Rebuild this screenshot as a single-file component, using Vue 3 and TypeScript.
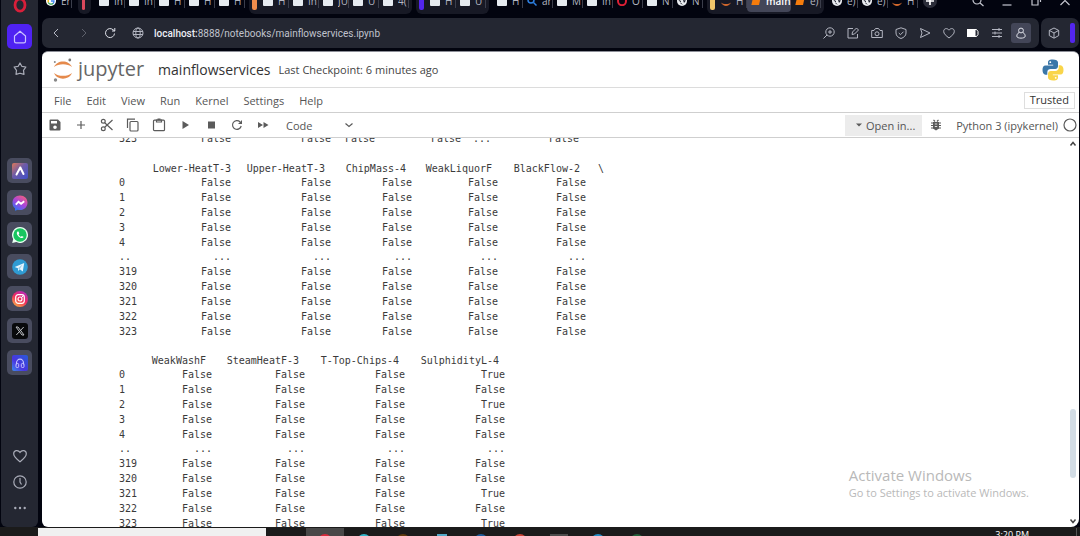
<script setup lang="ts">
import { ref } from 'vue'

interface Tab { icon: string; label: string; active?: boolean }
interface TabGroup { bar?: string; tabs: Tab[] }
interface Frame { widths: number[]; header: string[]; rows: string[][] }

const doc = (label: string): Tab => ({ icon: 'doc', label })

const groups: TabGroup[] = [
  { tabs: [{ icon: 'google', label: 'Er' }] },
  { bar: 'red', tabs: [] },
  { tabs: [doc('In'), doc('In'), doc('H'), doc('H'), doc('H')] },
  { bar: 'orange', tabs: [doc('H'), doc('In'), doc('JU'), doc('U'), doc('4(')] },
  { bar: 'blue', tabs: [doc('H'), doc('U')] },
  {
    tabs: [doc('H'), { icon: 'search', label: 'ar' }, doc('M'), doc('In'),
      { icon: 'opera', label: 'O' }, doc('N'), { icon: 'globe', label: 'N' }],
  },
  {
    bar: 'yellow',
    tabs: [{ icon: 'jupyter', label: 'H' }, { icon: 'book', label: 'main', active: true }, { icon: 'book', label: 'e)' }],
  },
  { tabs: [{ icon: 'globe', label: 'e)' }, { icon: 'globe', label: 'e)' }, { icon: 'jupyter', label: 'H' }] },
]

const menus = ['File', 'Edit', 'View', 'Run', 'Kernel', 'Settings', 'Help']
const apps = ['Aria', 'Messenger', 'WhatsApp', 'Telegram', 'Instagram', 'X', 'Player']
const tools = ['Save', 'Insert', 'Cut', 'Copy', 'Paste', 'Run', 'Stop', 'Restart', 'Run all']
const actions = ['Zoom', 'Edit page', 'Snapshot', 'Shield', 'Send', 'Favourite', 'Battery', 'Settings', 'Profile']
const cellType = ref('Code')

const index = ['0', '1', '2', '3', '4', '..', '319', '320', '321', '322', '323']
const build = (columns: number, last: (label: string) => string): string[][] =>
  index.map((label) => [
    label,
    ...Array.from({ length: columns - 1 }, () => (label === '..' ? '...' : 'False')),
    label === '..' ? '...' : last(label),
  ])
const trueRows = ['0', '2', '321', '323']

const previous: Frame = {
  widths: [24, 88, 100, 44, 86, 30, 88],
  header: [],
  rows: [['323', 'False', 'False', 'False', 'False', '...', 'False']],
}
const frames: Frame[] = [
  {
    widths: [24, 88, 100, 81, 86, 88, 24],
    header: ['', 'Lower-HeatT-3', 'Upper-HeatT-3', 'ChipMass-4', 'WeakLiquorF', 'BlackFlow-2', '\\'],
    rows: build(5, () => 'False').map((r) => [...r, '']),
  },
  {
    widths: [24, 69, 93, 100, 100],
    header: ['', 'WeakWashF', 'SteamHeatF-3', 'T-Top-Chips-4', 'SulphidityL-4'],
    rows: build(4, (l) => (trueRows.includes(l) ? 'True' : 'False')),
  },
]
const total = (widths: number[]) => widths.reduce((a, b) => a + b, 0)
const taskbar = ['opera', 'edge', 'folder', 'store', 'mail', 'chrome', 'terminal', 'code', 'excel']
</script>

<template>
  <div class="desktop">
    <div class="browser">
      <aside class="sidebar">
        <button class="side opera" aria-label="Opera">
          <svg viewBox="0 0 14 16"><ellipse cx="7" cy="8" rx="5" ry="6.200" fill="none" stroke="#d81f3a" stroke-width="2.800" /></svg>
        </button>
        <button class="side home" aria-label="Home">
          <svg viewBox="0 0 14 14"><path d="M1.5 6 7 1.2 12.5 6v5.2a1.6 1.6 0 0 1-1.6 1.6H3.100a1.600 1.600 0 0 1-1.600-1.600z" fill="none" stroke="#c9c0ff" stroke-width="1.2" stroke-linejoin="round" /></svg>
        </button>
        <button class="side star" aria-label="Bookmarks">
          <svg viewBox="0 0 14 14"><path d="M7 1 8.800 4.300 12.900 5 10.500 8.400 11 12.400 7 11.200 3 12.400 3.500 8.400 1.100 5 5.200 4.300z" fill="none" stroke="#a9acb8" stroke-width="1.200" stroke-linejoin="round" /></svg>
        </button>
        <div class="apps">
          <button v-for="app in apps" :key="app" class="side app" :aria-label="app">
            <svg viewBox="0 0 16 16">
              <defs>
                <linearGradient id="aria" x1="0" y1="0" x2="1" y2="1"><stop offset="0" stop-color="#e07858" /><stop offset=".45" stop-color="#6c5ba8" /><stop offset="1" stop-color="#3f4fc8" /></linearGradient>
                <linearGradient id="mess" x1=".2" y1="1" x2=".8" y2="0"><stop offset="0" stop-color="#2778f5" /><stop offset=".5" stop-color="#a744dc" /><stop offset="1" stop-color="#f4607c" /></linearGradient>
                <linearGradient id="insta" x1=".2" y1="1" x2=".8" y2="0"><stop offset="0" stop-color="#fcb045" /><stop offset=".5" stop-color="#ee2a5c" /><stop offset="1" stop-color="#b32bc4" /></linearGradient>
                <linearGradient id="play" x1="0" y1="1" x2="1" y2="0"><stop offset="0" stop-color="#3e8cf0" /><stop offset=".4" stop-color="#4a34e0" /><stop offset="1" stop-color="#285bd8" /></linearGradient>
              </defs>
              <g v-if="app === 'Aria'"><rect width="16" height="16" rx="2" fill="url(#aria)" /><path d="M4.500 11.500 8.300 4.500M8.300 4.500l3.200 6.500" fill="none" stroke="#fff" stroke-width="2" stroke-linecap="round" /></g>
              <g v-else-if="app === 'Messenger'"><path d="M8 .5c4.400 0 7.500 3.100 7.500 7.200S12.400 15 8 15c-.8 0-1.500-.1-2.200-.3L3 15.800v-2.500C1.300 12 .5 10 .5 7.700.5 3.600 3.600.5 8 .5z" fill="url(#mess)" /><path d="m3.800 9.700 2.700-3 2.600 2 3.100-2.500" fill="none" stroke="#fff" stroke-width="1.900" /></g>
              <g v-else-if="app === 'WhatsApp'"><path d="M8 0a8 8 0 1 1-3.700 15.100L.2 16l1-3.900A8 8 0 0 1 8 0z" fill="#e9fff2" /><circle cx="8" cy="8" r="6.700" fill="#18c660" /><path d="M5.500 4.500c-1.600 1.600 0 4 1.400 5.200 1.400 1.300 3.700 2.200 4.800.4l-1.800-1.200-1 .9C7.700 9.200 7 8.400 6.600 7.400l.7-1-.8-1.900z" fill="#fff" /></g>
              <g v-else-if="app === 'Telegram'"><circle cx="8" cy="8" r="7.800" fill="#2f9bd3" /><path d="m2.700 8 9.500-4-1.400 8.500-3.100-2.200-1.500 1.700-.3-2.800z" fill="#e5f6ff" /><path d="m6 9.200 4.500-3.800-2.800 4.900z" fill="#9acbe6" /></g>
              <g v-else-if="app === 'Instagram'"><circle cx="8" cy="8" r="8" fill="url(#insta)" /><rect x="3.700" y="3.700" width="8.600" height="8.600" rx="2.500" fill="none" stroke="#fff" stroke-width="1.200" /><circle cx="8" cy="8" r="2" fill="none" stroke="#fff" stroke-width="1.200" /><circle cx="10.500" cy="5.500" r=".7" fill="#fff" /></g>
              <g v-else-if="app === 'X'"><rect width="16" height="16" rx="3" fill="#08090b" /><path d="M4 4h2l6 8h-2zM11.700 4 4.300 12" fill="none" stroke="#bdbfc3" stroke-width="1" /></g>
              <g v-else><rect width="16" height="16" rx="2" fill="url(#play)" /><path d="M4.500 9.500V8a3.500 3.800 0 0 1 7 0v1.500" fill="none" stroke="#c3c4ff" stroke-width="1.200" /><rect x="4" y="8.500" width="2.700" height="4" rx="1" fill="none" stroke="#c3c4ff" /><rect x="9.300" y="8.500" width="2.700" height="4" rx="1" fill="none" stroke="#c3c4ff" /></g>
            </svg>
          </button>
        </div>
        <div class="side-bottom">
          <button class="side" aria-label="Likes"><svg viewBox="0 0 14 14"><path d="M7 12.700C3.500 9.900.7 8 .7 4.800.7 1.300 5 .4 7 3.400c2-3 6.300-2.100 6.300 1.400C13.300 8 10.500 9.900 7 12.700z" fill="none" stroke="#a9acb8" stroke-width="1.200" /></svg></button>
          <button class="side" aria-label="History"><svg viewBox="0 0 14 14"><circle cx="7" cy="7" r="6.200" fill="none" stroke="#a9acb8" stroke-width="1.200" /><path d="M7 3v4l1.500 2.500" fill="none" stroke="#a9acb8" stroke-width="1.200" /></svg></button>
          <button class="side" aria-label="More"><svg viewBox="0 0 14 14" fill="#a9acb8"><circle cx="2.300" cy="7" r="1.200" /><circle cx="7" cy="7" r="1.200" /><circle cx="11.700" cy="7" r="1.200" /></svg></button>
        </div>
      </aside>

      <div class="main">
        <div class="strip">
          <div v-for="(group, g) in groups" :key="g" class="group" :class="{ boxed: group.bar, folded: !group.tabs.length }">
            <span v-if="group.bar" class="bar" :class="group.bar"></span>
            <button v-for="(tab, t) in group.tabs" :key="t" class="tab" :class="{ active: tab.active }">
              <svg viewBox="0 0 10 10">
                <rect v-if="tab.icon === 'doc'" width="10" height="10" rx="1" fill="#e6ebf0" />
                <g v-else-if="tab.icon === 'google'"><circle cx="5" cy="5" r="5" fill="#fff" /><path d="M2.200 3.500v3" stroke="#f4b400" stroke-width="1.300" /><path d="M2.300 6.500c1 2 3.700 2.100 5 .8" fill="none" stroke="#34a853" stroke-width="1.300" /><path d="M5 5h3c0 1.500-.4 2-1 2.600" fill="none" stroke="#4285f4" stroke-width="1.300" /></g>
                <g v-else-if="tab.icon === 'search'" fill="none" stroke="#2d7fe0" stroke-width="1.500"><circle cx="4" cy="4" r="3" /><path d="m6.500 6.500 3 3" /></g>
                <ellipse v-else-if="tab.icon === 'opera'" cx="5" cy="5" rx="4" ry="4.200" fill="none" stroke="#dd1f35" stroke-width="2" />
                <g v-else-if="tab.icon === 'globe'"><circle cx="5" cy="5" r="5" fill="#e9ecf0" /><path d="M1 3.500 4 5 3.500 7.500 6 9M6 4l3 .5L7 7z" fill="#171a28" /></g>
                <path v-else-if="tab.icon === 'jupyter'" d="M0 6.500c2 4.500 8 4.500 10 0-2.500 2-7.500 2-10 0z" fill="#d0672c" />
                <path v-else d="M2.500 0H10L8 9H.3z" fill="#f57c0c" />
              </svg>
              <span>{{ tab.label }}</span>
            </button>
          </div>
          <button class="new-tab" aria-label="New tab"><svg viewBox="0 0 14 14"><circle cx="7" cy="7" r="7" fill="#2b2d39" /><path d="M7 3v8M3 7h8" stroke="#fff" stroke-width="1.700" /></svg></button>
          <div class="window-controls">
            <button aria-label="Search tabs"><svg viewBox="0 0 12 12"><circle cx="5" cy="5" r="4" /><path d="m8 8 3.500 3" /></svg></button>
            <button aria-label="Minimise"><svg viewBox="0 0 12 12"><path d="M1.500 10h9" /></svg></button>
            <button aria-label="Restore"><svg viewBox="0 0 12 12"><path d="M2 3h6v7H2zM5 .5h5.500V7" /></svg></button>
            <button aria-label="Close"><svg viewBox="0 0 12 12"><path d="m1.500 1 9 9M10.500 1l-9 9" /></svg></button>
          </div>
        </div>

        <div class="address-row">
          <div class="address">
            <button class="nav" aria-label="Back"><svg viewBox="0 0 12 12"><path d="M8 2 4 6l4 4" /></svg></button>
            <button class="nav dim" aria-label="Forward"><svg viewBox="0 0 12 12"><path d="m4 2 4 4-4 4" /></svg></button>
            <button class="nav" aria-label="Reload"><svg viewBox="0 0 12 12" class="reload"><path d="M10.500 6.500A4.500 4.500 0 1 1 9 2.700L10.800 4M10.800 1v3H8" /></svg></button>
            <svg class="site" viewBox="0 0 12 12"><circle cx="6" cy="6" r="5" /><ellipse cx="6" cy="6" rx="2.200" ry="5" /><path d="M1 4.500h10M1 7.500h10" /></svg>
            <a class="url" href="#"><b>localhost:</b>8888/notebooks/mainflowservices.ipynb</a>
            <div class="actions">
              <button v-for="action in actions" :key="action" :aria-label="action" :class="{ profile: action === 'Profile' }">
                <svg viewBox="0 0 12 12">
                  <g v-if="action === 'Zoom'"><circle cx="7" cy="5" r="4.200" /><path d="M4 8 .5 11.500M5 5h4M7 3v4" /></g>
                  <g v-else-if="action === 'Edit page'"><path d="M6 1.500H1v9.500h9.500V7M5 7.500l.5-2.500L9.500 1 11.500 3l-4 4z" /></g>
                  <g v-else-if="action === 'Snapshot'"><path d="M.7 3.500H3L4.500 1.500h3L9 3.500h2.300v7H.7z" /><circle cx="6" cy="6.800" r="2" /></g>
                  <g v-else-if="action === 'Shield'"><path d="M6 .8 11 2.500V6c0 2.700-2 4.500-5 5.500C3 10.500 1 8.700 1 6V2.500zM3.800 6l1.700 1.700 3-3" /></g>
                  <path v-else-if="action === 'Send'" d="m1.500 1.500 9.500 4.500-9.500 4.500L3 6z" />
                  <path v-else-if="action === 'Favourite'" d="M6 11C3 8.600.7 7 .7 4.300.7 1.300 4.300.6 6 3.200c1.700-2.600 5.300-1.900 5.300 1.100C11.300 7 9 8.600 6 11z" />
                  <g v-else-if="action === 'Battery'"><path d="M0 2.500h8v7H0z" fill="#fff" stroke="#fff" /><path d="M8 2.500h1.500l1.500 2v3l-1.500 2H8" stroke="#fff" /></g>
                  <path v-else-if="action === 'Settings'" d="M1 2.500h10M1 6h10M1 9.500h10M8 1v3M4 4.500v3M8 8v3" />
                  <g v-else stroke="#e0e2ea"><circle cx="6" cy="3.500" r="2.400" /><path d="M4 5.500C2.500 6.500 1.800 7.700 1.800 9.200c0 2.600 8.400 2.600 8.400 0 0-1.500-.7-2.700-2.200-3.700" /></g>
                </svg>
              </button>
            </div>
          </div>
          <div class="extras">
            <button aria-label="Extensions"><svg viewBox="0 0 12 12"><path d="m6 1 4.700 2.400v5.200L6 11.200 1.300 8.600V3.400zM1.300 3.400 6 6l4.700-2.600M6 6v5" /></svg></button>
            <span class="accent"></span>
          </div>
        </div>

        <div class="page">
          <header class="title-row">
            <svg class="mark" viewBox="0 0 20 24"><path d="M1 9C4 1.500 16 1.500 19 9 14.500 5.200 5.500 5.200 1 9zM1 15c3 7.500 15 7.500 18 0-4.500 3.800-13.500 3.800-18 0z" fill="#e58a4c" /><circle cx="16.800" cy="2" r="1.400" fill="#777" /><circle cx="2.500" cy="22" r="1.700" fill="#888" /><circle cx="1.800" cy="4" r="1" fill="#888" /></svg>
            <span class="brand">jupyter</span>
            <h1>mainflowservices</h1>
            <span class="checkpoint">Last Checkpoint: 6 minutes ago</span>
            <svg class="python" viewBox="0 0 22 22"><path d="M10.800.5C6.500.5 6 2 6 3.500v2.200h5.200v.8H3.500C1.300 6.500.5 8.500.5 11s1 4.700 3 4.700h1.800v-2.500c0-2 1.500-3.200 3.400-3.200h4.600c1.500 0 2.700-1.200 2.700-2.700V3.500C16 1.500 14 .5 10.800.5z" fill="#3b77a8" /><path d="M11.200 21.500c4.300 0 4.800-1.500 4.800-3v-2.200h-5.200v-.8h7.700c2.200 0 3-2 3-4.500s-1-4.700-3-4.700h-1.800v2.500c0 2-1.500 3.200-3.400 3.200H8.700C7.200 12 6 13.200 6 14.700v3.800c0 2 2 3 5.200 3z" fill="#f9d54a" /><circle cx="8.300" cy="3.200" r=".9" fill="#fff" /><circle cx="13.700" cy="18.800" r=".9" fill="#fff" /></svg>
          </header>

          <nav class="menu-row">
            <button v-for="menu in menus" :key="menu">{{ menu }}</button>
            <button class="trusted">Trusted</button>
          </nav>

          <div class="toolbar">
            <button v-for="tool in tools" :key="tool" class="tool" :aria-label="tool">
              <svg viewBox="0 0 14 14">
                <path v-if="tool === 'Save'" fill-rule="evenodd" d="M2.500 1.500H10L12.500 4v7.500a1 1 0 0 1-1 1h-9a1 1 0 0 1-1-1v-9a1 1 0 0 1 1-1zM3 3v2.500h6V3zm4 4.500a1.800 1.800 0 1 0 0 3.600 1.800 1.800 0 0 0 0-3.600z" />
                <path v-else-if="tool === 'Insert'" class="line" d="M7 3v8M3 7h8" />
                <g v-else-if="tool === 'Cut'" class="line"><circle cx="3.300" cy="3.300" r="1.900" /><circle cx="3.300" cy="10.700" r="1.900" /><path d="M4.700 4.700 12.500 12M4.700 9.300 12.500 2" /></g>
                <g v-else-if="tool === 'Copy'" class="line"><path d="M1.500 10V1.200H9" /><rect x="4" y="3.500" width="8" height="9.500" rx="1" /></g>
                <g v-else-if="tool === 'Paste'" class="line"><rect x="1.500" y="2.200" width="11" height="10.500" rx="1" /><path d="M4.500 2h5v2h-5zM5.500 1h3" /></g>
                <path v-else-if="tool === 'Run'" d="M4.500 3v8l6.500-4z" />
                <path v-else-if="tool === 'Stop'" d="M4 3.500h7v7H4z" />
                <g v-else-if="tool === 'Restart'"><path class="line" d="M11.200 8A4.400 4.400 0 1 1 10 3.800" /><path d="M12 2v4H8z" /></g>
                <path v-else d="M2 4v6l5-3zM7.500 4v6l5-3z" />
              </svg>
            </button>
            <label class="cell-type">
              <select v-model="cellType" aria-label="Cell type"><option>Code</option><option>Markdown</option><option>Raw</option></select>
              <svg viewBox="0 0 10 10"><path class="line" d="m1.500 3.500 3.500 3 3.500-3" /></svg>
            </label>
            <button class="open-in"><svg viewBox="0 0 6 6"><path d="M0 1.500h6L3 4.500z" /></svg>Open in...</button>
            <button class="bug" aria-label="Debugger"><svg viewBox="0 0 12 12"><path d="M3 3h6v6.500L6 11.500 3 9.500z" /><path class="line" d="M1 4h10M1 6.500h10M1 9h10M3.500.8 5 2.500M8.500.8 7 2.500" /><path d="M4.800 5h2.400M4.800 7.500h2.400" stroke="#ddd" /></svg></button>
            <button class="kernel">Python 3 (ipykernel)</button>
            <svg class="status" viewBox="0 0 14 14"><circle class="line" cx="7" cy="7" r="6" /></svg>
          </div>

          <div class="notebook">
            <div class="output">
              <table class="frame single" :style="{ width: total(previous.widths) + 'px' }">
                <colgroup><col v-for="(w, i) in previous.widths" :key="i" :style="{ width: w + 'px' }" /></colgroup>
                <tbody><tr v-for="row in previous.rows" :key="row[0]"><th scope="row">{{ row[0] }}</th><td v-for="(cell, c) in row.slice(1)" :key="c">{{ cell }}</td></tr></tbody>
              </table>
              <table v-for="(frame, f) in frames" :key="f" class="frame" :style="{ width: total(frame.widths) + 'px' }">
                <colgroup><col v-for="(w, i) in frame.widths" :key="i" :style="{ width: w + 'px' }" /></colgroup>
                <thead><tr><th v-for="(name, i) in frame.header" :key="i" scope="col" :class="{ flush: name === 'Lower-HeatT-3' }">{{ name }}</th></tr></thead>
                <tbody><tr v-for="row in frame.rows" :key="row[0]"><th scope="row">{{ row[0] }}</th><td v-for="(cell, c) in row.slice(1)" :key="c">{{ cell }}</td></tr></tbody>
              </table>
            </div>
            <div class="scrollbar">
              <svg viewBox="0 0 8 8"><path d="m1.500 5.500 2.500-3 2.500 3" /></svg>
              <span class="before"></span><span class="thumb"></span><span class="after"></span>
              <svg viewBox="0 0 8 8"><path d="m1.500 2.500 2.500 3 2.500-3" /></svg>
            </div>
            <div class="watermark"><p>Activate Windows</p><small>Go to Settings to activate Windows.</small></div>
          </div>
        </div>
      </div>
    </div>

    <footer class="taskbar">
      <input class="task-search" type="search" aria-label="Search" />
      <div class="task-items"><button v-for="item in taskbar" :key="item" :class="item" :aria-label="item"><i></i></button></div>
      <time>3:20 PM</time>
    </footer>
  </div>
</template>

<style>
html, body { margin: 0; overflow: hidden; background: #02040f; }
</style>

<style scoped>
* { box-sizing: border-box; }
button, input, select { margin: 0; padding: 0; border: 0; background: none; font: inherit; color: inherit; border-radius: 0; }
button { display: flex; align-items: center; justify-content: center; flex: none; white-space: nowrap; }
svg { display: block; flex: none; }
.desktop { height: 100vh; display: flex; flex-direction: column; overflow: hidden; background: #02040f; font-family: "Open Sans", "Noto Sans", sans-serif; font-size: 11px; }
.browser { flex: 1; min-height: 0; display: flex; gap: 4px; padding: 0 1px; }

.sidebar { width: 37px; flex: none; display: flex; flex-direction: column; align-items: center; background: #242732; border-radius: 0 0 6px 6px; }
.side { width: 25px; height: 25px; border-radius: 5px; }
.side svg { width: 14px; height: 14px; }
.opera { height: 24px; align-items: flex-start; }
.opera svg { width: 14px; height: 16px; margin-top: -3px; }
.home { background: #4f22f2; }
.star { margin-top: 7px; }
.apps { display: flex; flex-direction: column; gap: 7px; margin-top: 77px; }
.app { background: #494c5f; }
.app svg { width: 16px; height: 16px; }
.side-bottom { margin-top: auto; padding-bottom: 7px; display: flex; flex-direction: column; gap: 1px; }

.main { flex: 1; min-width: 0; display: flex; flex-direction: column; }
.strip { height: 26px; margin-top: -12px; display: flex; align-items: stretch; color: #b4b7c2; font-size: 10px; gap: 4px; }
.group { display: flex; align-items: center; }
.boxed { background: #171925; border-radius: 6px; padding: 0 3px; }
.boxed.folded { width: 13px; margin: 0 0 0 2px; padding: 0 4px; }
.bar { width: 5px; height: 17px; border-radius: 2px; margin-right: 2px; }
.red { background: #d9485c; }
.orange { background: #f08c4c; }
.blue { background: #5326ee; }
.yellow { background: #f1c56a; }
.tab { width: 30px; height: 22px; padding: 0 0 0 4px; gap: 5px; justify-content: flex-start; }
.tab svg { width: 10px; height: 10px; }
.tab span { flex: 1; height: 14px; line-height: 14px; overflow: hidden; text-align: left; border-right: 1px solid #3b3e4b; }
.tab.active { width: 44px; background: #434658; border-radius: 4px; color: #fff; font-weight: 600; }
.tab.active span { border: 0; }
.new-tab { margin-left: 1px; }
.new-tab svg { width: 14px; height: 14px; }
.window-controls { margin-left: auto; padding-right: 8px; display: flex; gap: 17px; }
.window-controls svg { width: 12px; height: 12px; fill: none; stroke: #c5c7d0; stroke-width: 1.200; }

.address-row { display: flex; gap: 2px; height: 30px; margin-top: 4px; }
.address, .extras { display: flex; align-items: center; background: #242732; border-radius: 7px; color: #b4b7c2; }
.address { flex: 1; min-width: 0; padding: 0 8px; }
.address svg, .extras svg { width: 12px; height: 12px; fill: none; stroke: #b4b7c2; stroke-width: 1; }
.address .reload { stroke: #e0e2ea; }
.nav { width: 12px; height: 20px; margin-right: 16px; }
.nav.dim { opacity: .4; margin-right: 14px; }
.site { margin-right: 10px; }
.url { color: #c0c3cd; text-decoration: none; white-space: nowrap; font-family: Roboto, sans-serif; font-size: 10px; }
.url b { color: #eceef4; font-weight: 500; }
.actions { margin-left: auto; display: flex; align-items: center; gap: 4px; }
.actions button { width: 20px; height: 20px; border-radius: 3px; }
.actions .profile { background: #434658; }
.extras { width: 38px; padding: 0 4px 0 7px; justify-content: space-between; }
.accent { width: 5px; height: 20px; border-radius: 2px; background: #5326ee; }

.page { flex: 1; min-height: 0; margin-top: 3px; display: flex; flex-direction: column; background: #fff; border-top: 1px solid #8d8f98; border-radius: 6px 6px 8px 6px; overflow: hidden; color: #555; fill: #5b5b5b; }
.line { fill: none; stroke: #5b5b5b; stroke-width: 1.200; }
.title-row { height: 36px; flex: none; display: flex; align-items: center; padding: 0 15px 0 11px; border-bottom: 1px solid #dcdcdc; }
.mark { width: 20px; height: 24px; }
.brand { margin-left: 5px; font-size: 20px; line-height: 24px; padding-bottom: 2px; color: #666; }
h1 { margin: 0 0 0 14px; font-size: 14px; line-height: 20px; font-weight: 400; color: #333; }
.checkpoint { margin-left: 8px; color: #444; }
.python { width: 22px; height: 22px; margin-left: auto; }
.menu-row { height: 25px; flex: none; display: flex; align-items: center; gap: 15px; padding: 0 4px 0 12px; border-bottom: 1px solid #cfcfcf; }
.trusted { margin-left: auto; height: 17px; padding: 0 5px 2px; border: 1px solid #dedede; color: #333; }
.toolbar { height: 25px; flex: none; display: flex; align-items: center; padding-right: 2px; border-bottom: 1px solid #cfcfcf; }
.tool { width: 26px; height: 22px; }
.tool svg, .status { width: 14px; height: 14px; }
.cell-type { display: flex; align-items: center; margin-left: 10px; width: 68px; }
.cell-type select { flex: 1; min-width: 0; appearance: none; }
.cell-type svg { width: 10px; height: 10px; }
.open-in { margin-left: auto; width: 77px; height: 21px; gap: 4px; padding-left: 4px; background: #ececec; }
.open-in svg { width: 6px; height: 6px; }
.bug { width: 28px; }
.bug svg { width: 12px; height: 12px; }
.kernel { margin: 0 5px 0 6px; }

.notebook { flex: 1; min-height: 0; display: flex; position: relative; overflow: hidden; }
.output { flex: 1; min-width: 0; overflow: hidden; padding-left: 77px; }
.frame { height: 177px; margin-bottom: 15px; table-layout: fixed; border-collapse: collapse; font-family: "DejaVu Sans Mono", monospace; font-size: 10px; line-height: 14px; color: #3a3a3a; }
.single { height: 15px; margin: -7px 0 16px; }
.frame th, .frame td { padding: 0; font-weight: 400; text-align: right; white-space: nowrap; }
.frame tbody th { text-align: left; }
.frame thead th { padding-right: 6px; }
.frame thead .flush { padding-right: 0; }
.scrollbar { width: 12px; flex: none; display: flex; flex-direction: column; align-items: center; padding: 2px 0; }
.scrollbar svg { width: 8px; height: 8px; fill: none; stroke: #444; stroke-width: 1.500; }
.before { flex: 262; }
.thumb { flex: 69; width: 6px; border-radius: 3px; background: #d2dce5; }
.after { flex: 39; }
.watermark { position: absolute; right: 50px; bottom: 25px; color: #b9b9b9; line-height: 18px; }
.watermark p { margin: 0; font-size: 15px; }
.watermark small { display: block; font-size: 11px; }

.taskbar { height: 9px; flex: none; display: flex; padding: 1px 3px 0 38px; background: #1b1b1b; overflow: hidden; }
.task-search { width: 228px; height: 24px; flex: none; background: #f0f0f0; }
.task-items { display: flex; margin-left: 40px; height: 24px; }
.task-items button { width: 38px; margin-right: 1px; align-items: flex-start; padding-top: 6px; }
.task-items i { width: 14px; height: 14px; border-radius: 7px; }
.task-items .opera { height: 24px; background: #484848; }
.opera i { background: #d8293a; }
.edge i { background: #32b5c9; }
.folder i { background: #5e3a0c; }
.task-items .store i { border-radius: 0; background: #52a9c8; width: 10px; }
.mail i { background: #1b5b9a; }
.chrome i { background: #c84335; }
.task-items .terminal i { border-radius: 0; background: #4c4c4c; width: 18px; }
.code i { background: #238bc4; }
.excel i { background: #23603a; }
.taskbar time { margin-left: auto; padding: 1px 47px 0 0; border-right: 1px solid #555; font-size: 9px; line-height: 12px; color: #fff; }
</style>
